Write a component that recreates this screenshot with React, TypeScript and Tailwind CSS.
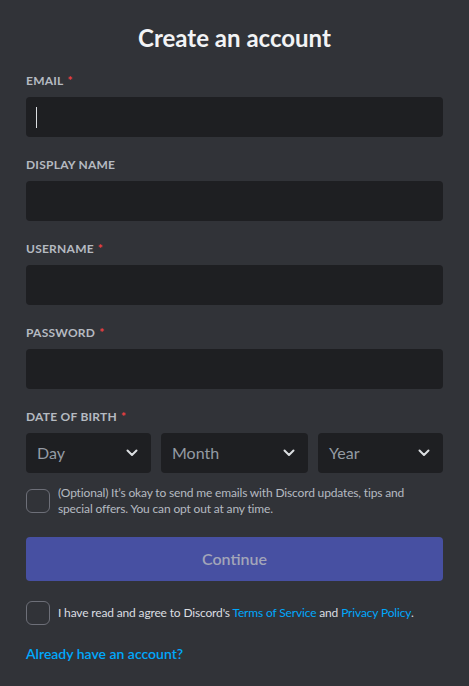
import React, { useState } from "react";

const Required = () => <span className="text-[#f23f42] pl-1">*</span>;

const Label = ({ text, required }: { text: string; required?: boolean }) => (
  <div className="h-4 leading-4 mb-2 text-[12px] font-bold uppercase tracking-[0.02em] text-[#b5bac1]">
    {text}
    {required && <Required />}
  </div>
);

const Chevron = () => (
  <svg width="12" height="8" viewBox="0 0 12 8" fill="none" className="shrink-0">
    <path d="M1.5 1.5 6 6l4.5-4.5" stroke="#dbdee1" strokeWidth="2" strokeLinecap="round" strokeLinejoin="round" />
  </svg>
);

const Select = ({ placeholder, className }: { placeholder: string; className: string }) => (
  <div
    className={`${className} h-10 rounded-[4px] bg-[#1e1f22] flex items-center justify-between pl-[11px] pr-[13px] text-[16px] text-[#949ba4]`}
  >
    <span>{placeholder}</span>
    <Chevron />
  </div>
);

const Checkbox = () => <div className="w-6 h-6 shrink-0 rounded-[6px] border border-[#6d6f78]" />;

const App: React.FC = () => {
  const [fields] = useState([
    { label: "Email", required: true, focus: true },
    { label: "Display Name", required: false },
    { label: "Username", required: true },
    { label: "Password", required: true },
  ]);

  return (
    <div
      className="min-h-screen bg-[#313338] px-[26px] pt-[22px] pb-6"
      style={{ fontFamily: "Lato, 'Noto Sans', sans-serif" }}
    >
      <h1 className="text-center text-[24px] leading-8 font-bold text-[#f2f3f5] mb-[19px]">Create an account</h1>

      {fields.map((f) => (
        <div key={f.label} className="mb-5">
          <Label text={f.label} required={f.required} />
          <div className="h-10 rounded-[4px] bg-[#1e1f22] flex items-center px-[10px]">
            {f.focus && <span className="w-px h-[21px] bg-[#dbdee1]" />}
          </div>
        </div>
      ))}

      <Label text="Date of birth" required />
      <div className="flex gap-[10px]">
        <Select placeholder="Day" className="w-[125px]" />
        <Select placeholder="Month" className="flex-1" />
        <Select placeholder="Year" className="w-[125px]" />
      </div>

      <div className="flex items-center gap-2 mt-3">
        <Checkbox />
        <p className="text-[12px] leading-4 tracking-[-0.013em] text-[#b5bac1] pr-8">
          (Optional) It’s okay to send me emails with Discord updates, tips and special offers. You can opt out at
          any time.
        </p>
      </div>

      <button className="mt-5 w-full h-11 rounded-[4px] bg-[#4750a2] text-[16px] font-semibold text-[#a2a5b9]">
        Continue
      </button>

      <div className="flex items-center gap-2 mt-5">
        <Checkbox />
        <p className="text-[12px] leading-4 tracking-[-0.013em] text-[#dbdee1]">
          I have read and agree to Discord's <span className="text-[#00a8fc]">Terms of Service</span> and{" "}
          <span className="text-[#00a8fc]">Privacy Policy</span>.
        </p>
      </div>

      <div className="mt-[21px] text-[14px] leading-4 font-semibold text-[#00a8fc]">Already have an account?</div>
    </div>
  );
};

export default App;
